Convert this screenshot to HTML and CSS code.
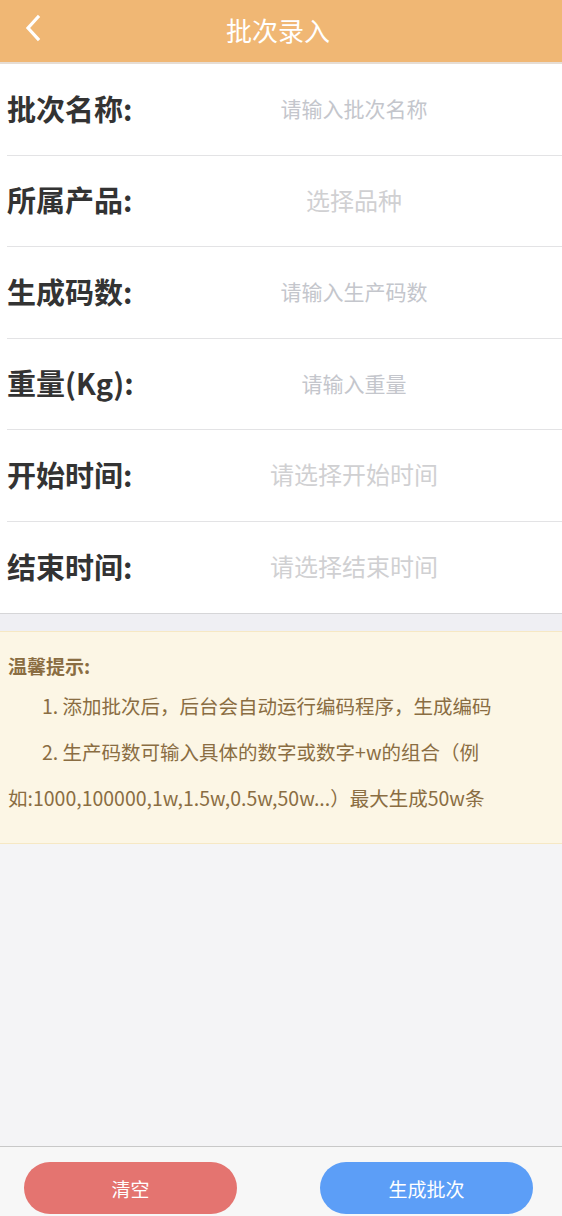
FILE: index.html
```html
<!DOCTYPE html>
<html lang="zh-CN">
<head>
<meta charset="utf-8">
<title>批次录入</title>
<link rel="stylesheet" href="styles.css">
</head>
<body>
<div class="page">
  <header class="nav">
    <span class="nav-back">
      <svg width="20" height="28" viewBox="0 0 20 28"><path d="M14 3 L4 14 L14 25" fill="none" stroke="#fff" stroke-width="3.2" stroke-linecap="square" stroke-linejoin="miter"/></svg>
    </span>
    <h1 class="nav-title">批次录入</h1>
  </header>

  <section class="form">
    <div class="row"><div class="label">批次名称:</div><div class="input">请输入批次名称</div></div>
    <div class="row"><div class="label">所属产品:</div><div class="input picker">选择品种</div></div>
    <div class="row"><div class="label">生成码数:</div><div class="input">请输入生产码数</div></div>
    <div class="row"><div class="label">重量(Kg):</div><div class="input">请输入重量</div></div>
    <div class="row"><div class="label">开始时间:</div><div class="input picker">请选择开始时间</div></div>
    <div class="row"><div class="label">结束时间:</div><div class="input picker">请选择结束时间</div></div>
  </section>

  <div class="gap"></div>

  <section class="tips">
    <div class="tips-title">温馨提示:</div>
    <p class="tips-item">1. 添加批次后，后台会自动运行编码程序，生成编码</p>
    <p class="tips-item">2. 生产码数可输入具体的数字或数字+w的组合（例如:1000,100000,1w,1.5w,0.5w,50w...）最大生成50w条</p>
  </section>

  <div class="spacer"></div>

  <footer class="footer">
    <button class="btn btn-clear">清空</button>
    <button class="btn btn-submit">生成批次</button>
  </footer>
</div>
</body>
</html>
```

FILE: styles.css
```css
* { box-sizing: border-box; }
html, body { margin: 0; padding: 0; }
body {
  font-family: "Noto Sans CJK SC", "Noto Sans", sans-serif;
  background: #f4f4f6;
}
.page {
  min-height: 1216px;
  display: flex;
  flex-direction: column;
  background: #f4f4f6;
}
.nav {
  position: relative;
  height: 64px;
  background: #f0b774;
  border-bottom: 2px solid #e6ddd4;
  display: flex;
  align-items: center;
  justify-content: center;
}
.nav-back {
  position: absolute;
  left: 24px;
  top: 14px;
  width: 20px;
  height: 28px;
  display: block;
}
.nav-back svg { display: block; }
.nav-title {
  margin: 0 6px 2px 0;
  font-size: 26px;
  font-weight: 400;
  color: #fff;
  line-height: 32px;
}
.form {
  background: #fff;
  border-bottom: 1px solid #d6d6d8;
}
.row {
  margin-left: 7px;
  height: 91.5px;
  display: flex;
  align-items: center;
  border-bottom: 1px solid #e3e3e5;
}
.row:last-child { border-bottom: none; height: 91px; }
.label {
  width: 139px;
  font-size: 29px;
  font-weight: 700;
  color: #333;
  line-height: 34px;
  margin-top: -3px;
  white-space: nowrap;
}
.input {
  flex: 1;
  text-align: center;
  font-size: 21px;
  color: #c4c6cc;
  line-height: 28px;
  margin-top: -2px;
}
.input.picker {
  font-size: 24px;
  color: #d0d0d2;
}
.gap {
  height: 17px;
  background: #efeff3;
}
.tips {
  background: #fcf6e5;
  border-top: 1px solid #f6e8c4;
  border-bottom: 1px solid #f6e8c4;
  padding: 17px 8px 22px 8px;
  color: #8a6d42;
}
.tips-title {
  font-size: 19px;
  font-weight: 700;
  line-height: 34px;
}
.tips-item {
  margin: 0;
  font-size: 19.5px;
  line-height: 46px;
  text-indent: 34px;
  padding-right: 57px;
}
.spacer { flex: 1; }
.footer {
  height: 70px;
  background: #f7f7f7;
  border-top: 1px solid #c8c8c8;
  display: flex;
  justify-content: space-between;
  padding: 15px 29px 0 24px;
}
.btn {
  width: 213px;
  height: 52px;
  border: none;
  border-radius: 26px;
  color: #fff;
  font-family: "Noto Sans CJK SC", sans-serif;
  font-size: 19px;
  padding: 0;
}
.btn-clear { background: #e47470; }
.btn-submit { background: #5c9ef7; }
```
